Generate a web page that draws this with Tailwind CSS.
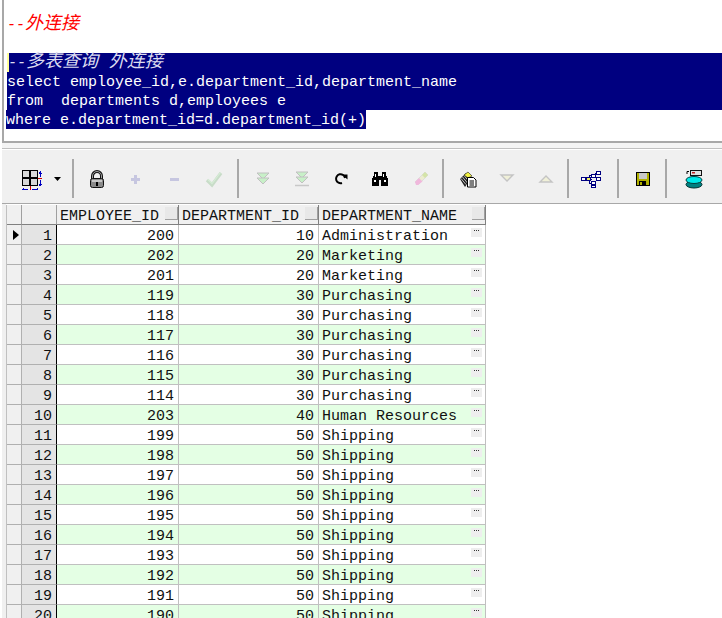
<!DOCTYPE html>
<html lang="en">
  <head>
    <title>Outer join query</title>
    <meta charset="utf-8">
    <script src="https://cdn.jsdelivr.net/npm/@tailwindcss/browser@4"></script>
  </head>

  <body class="bg-white">
   <div class="w-[722px] h-[618px] overflow-hidden flex flex-col bg-white font-['Liberation_Mono','Noto_Sans_CJK_SC',monospace] text-[15px] text-[#111]">

    <!-- sql editor -->
    <div class="h-[143px] ml-[2px] border-l-2 border-b-2 border-[#a8a8a8] pt-[14px] pl-[3px] shrink-0">
      <div class="h-[20px] leading-[20px] italic text-[#ff0000] text-[18px]"><span class="text-[15px]">--</span>外连接</div>
      <div class="mt-[19px] bg-[#000080] text-white leading-[21px] relative">
        <div class="absolute left-0 top-0 w-[2px] h-[19px] bg-[#ffff99]"></div>
        <div class="h-[19px] leading-[19px] italic text-[#dcdcf0] text-[18px] pl-[1px] whitespace-pre"><span class="text-[15px]">--</span>多表查询 外连接</div>
        <div class="h-[19px] whitespace-pre">select employee_id,e.department_id,department_name</div>
        <div class="h-[19px] whitespace-pre">from  departments d,employees e</div>
      </div>
      <div class="h-[19px] leading-[21px] bg-[#000080] text-white w-[360px] -ml-[1px] whitespace-pre">where e.department_id=d.department_id(+)</div>
    </div>

    <div class="h-[5px] shrink-0 bg-[#f4f4f4] ml-[2px]"></div>
    <div class="h-[1px] shrink-0 bg-[#c0c0c0] ml-[2px]"></div>
    <div class="h-[1px] shrink-0"></div>

    <!-- toolbar -->
    <div class="h-[54px] ml-[2px] pt-[9px] bg-[#f0f0f0] border-b border-[#a8a8a8] flex items-start shrink-0 pl-[10px]">
      <button class="w-[38px] h-[39px] flex items-center justify-center">
        <svg width="24" height="24" shape-rendering="crispEdges"><rect x="4" y="4" width="14" height="14" fill="#d8d8d8"/><path d="M3.5 3.5h15v15h-15zM11 3.5v15M3.5 11h15" fill="none" stroke="#000" stroke-width="1.4"/><path d="M19 11h4M11 19v4" stroke="#d00000" fill="none"/><path d="M21 4v6M19.5 6h3M20 5h2M21 13v6M19.5 17h3M20 18h2M3 22h6M4 21v2M13 22h6M18 21v2" stroke="#0000c0" fill="none"/></svg>
      </button>
      <button class="w-[16px] h-[39px] flex items-center justify-center">
        <svg width="8" height="6"><path d="M0 1h7L3.5 5z" fill="#000"/></svg>
      </button>
      <div class="w-[2px] h-[39px] bg-[#a8a8a8] ml-[6px] mr-[3px]"></div>
      <button class="w-[39px] h-[39px] flex items-center justify-center">
        <svg width="24" height="24"><path d="M7.5 12V9a4.500 4.500 0 0 1 9 0V12" fill="none" stroke="#111" stroke-width="3"/><path d="M7.500 12V9a4.500 4.500 0 0 1 9 0V12" fill="none" stroke="#a0a0a0" stroke-width="1"/><rect x="5.500" y="11.500" width="13" height="9" rx="2" fill="#8a8a8a" stroke="#111"/><rect x="7" y="13" width="10" height="2" fill="#c8c8c8"/><path d="M12 15v4" stroke="#000" stroke-width="2"/></svg>
      </button>
      <button class="w-[39px] h-[39px] flex items-center justify-center">
        <svg width="24" height="24" shape-rendering="crispEdges"><path d="M10 8h3v3h3v3h-3v3h-3v-3H7v-3h3z" fill="#c6c6e0"/></svg>
      </button>
      <button class="w-[39px] h-[39px] flex items-center justify-center">
        <svg width="24" height="24" shape-rendering="crispEdges"><rect x="7" y="11" width="9" height="3" fill="#c6c6e0"/></svg>
      </button>
      <button class="w-[39px] h-[39px] flex items-center justify-center">
        <svg width="24" height="24"><path d="M5 13l5 5L19 6" fill="none" stroke="#c8dcc8" stroke-width="3.4"/><path d="M6 12.5l4 4L18.500 5.500" fill="none" stroke="#d6ecd6" stroke-width="1.2"/></svg>
      </button>
      <div class="w-[2px] h-[39px] bg-[#a8a8a8] ml-[4px] mr-[4px]"></div>
      <button class="w-[39px] h-[39px] flex items-center justify-center">
        <svg width="24" height="24"><path d="M6 6h12l-6 6z" fill="#c8f0c8" stroke="#c0c0c0"/><path d="M6 11h12l-6 6z" fill="#c8f0c8" stroke="#c0c0c0"/></svg>
      </button>
      <button class="w-[39px] h-[39px] flex items-center justify-center">
        <svg width="24" height="24"><path d="M6 5h12l-6 6z" fill="#c8f0c8" stroke="#c0c0c0"/><path d="M6 10h12l-6 6z" fill="#c8f0c8" stroke="#c0c0c0"/><path d="M5 18.500h14" stroke="#c8c8c8" stroke-width="1.500"/></svg>
      </button>
      <button class="w-[39px] h-[39px] flex items-center justify-center">
        <svg width="24" height="24"><path d="M16 11a4.500 4.500 0 1 0-3 5" fill="none" stroke="#000" stroke-width="2"/><path d="M13 7.500h5.500V12.500z" fill="#000"/></svg>
      </button>
      <button class="w-[40px] h-[39px] flex items-center justify-center">
        <svg width="24" height="24" shape-rendering="crispEdges"><path d="M6 5h4v4h4V5h4v4h1v2h1v8h-7v-6h-2v6H4v-8h1V9h1z" fill="#000"/><path d="M6 13h2v2H6zM16 13h2v2h-2zM7 7h1v3H7zM15 7h1v3h-1z" fill="#fff"/></svg>
      </button>
      <button class="w-[41px] h-[39px] flex items-center justify-center">
        <svg width="24" height="24"><path d="M6 15L16 5l3 3-10 10z" fill="#ececd0" stroke="#dcdcdc"/><path d="M6 15l4-4 3.500 3.500-4.500 3.500-2 0z" fill="#f0b8dc"/><path d="M13 8l3-3 3 3-3 3z" fill="#d4e4a8"/></svg>
      </button>
      <div class="w-[2px] h-[39px] bg-[#a8a8a8] ml-[1px] mr-[4px]"></div>
      <button class="w-[39px] h-[39px] flex items-center justify-center">
        <svg width="24" height="24"><path d="M4 12l6-6 5 5-6 9z" fill="#222"/><path d="M5 11.500l5 6M6.500 10l5 6M8 8.500l5 6" stroke="#fff" stroke-width=".7"/><path d="M8 8l4-3 4 4-4 2z" fill="#f0f040" stroke="#222" stroke-width=".6"/><path d="M11.500 10.500h6l2.500 2.500v7h-8.500z" fill="#fff" stroke="#000"/><path d="M13.500 14h4.500M13.500 16h4.500M13.500 18h4.500" stroke="#000"/></svg>
      </button>
      <button class="w-[39px] h-[39px] flex items-center justify-center">
        <svg width="24" height="24"><path d="M6 8h12l-6 6z" fill="#f0f0d8" stroke="#c4c4c4" stroke-width="1.400"/></svg>
      </button>
      <button class="w-[39px] h-[39px] flex items-center justify-center">
        <svg width="24" height="24"><path d="M6 15h12l-6-6z" fill="#f0f0d8" stroke="#c4c4c4" stroke-width="1.400"/></svg>
      </button>
      <div class="w-[2px] h-[39px] bg-[#a8a8a8] ml-[2px] mr-[3px]"></div>
      <button class="w-[39px] h-[39px] flex items-center justify-center">
        <svg width="24" height="24" shape-rendering="crispEdges"><g transform="translate(-2 0)"><path d="M7 12h7M11 12V8h2M11 12v4h2M17 6v4M17 14v4" fill="none" stroke="#000080"/><g fill="#fff" stroke="#000080"><rect x="3.500" y="10.500" width="4" height="2.500"/><rect x="8.500" y="10.500" width="4" height="2.500" fill="#f0f060"/><rect x="13.500" y="7.500" width="4" height="2.500"/><rect x="13.500" y="14.500" width="4" height="2.500"/><rect x="18" y="4.500" width="4" height="2.500"/><rect x="18" y="10.500" width="4" height="2.500"/><rect x="13.500" y="18" width="4" height="2.500"/></g></g></svg>
      </button>
      <div class="w-[2px] h-[39px] bg-[#a8a8a8] ml-[6px] mr-[4px]"></div>
      <button class="w-[39px] h-[39px] flex items-center justify-center">
        <svg width="24" height="24" shape-rendering="crispEdges"><rect x="5" y="5" width="14" height="14" fill="#000"/><rect x="6" y="6" width="12" height="12" fill="#b0b000"/><rect x="8" y="6" width="8" height="6" fill="#c8c8c8"/><rect x="8" y="14" width="7" height="4" fill="#000"/><rect x="9" y="15" width="2" height="3" fill="#b0b000"/></svg>
      </button>
      <div class="w-[2px] h-[39px] bg-[#a8a8a8] ml-[3px] mr-[7px]"></div>
      <button class="w-[39px] h-[39px] flex items-center justify-center">
        <svg width="24" height="24"><path d="M5 7V4.500h2" fill="none" stroke="#000"/><rect x="8.500" y="3.500" width="11" height="5" fill="#e0e0e0" stroke="#111"/><rect x="10" y="5" width="3" height="1.500" fill="#c02020"/><ellipse cx="12" cy="17.500" rx="8" ry="3.500" fill="#008080" stroke="#003030"/><ellipse cx="12" cy="13" rx="8" ry="3.500" fill="#00e8e8" stroke="#004040"/></svg>
      </button>
    </div>

    <!-- result grid -->
    <div class="flex-1 ml-[2px] flex items-start pt-[1px] min-h-0">
      <div class="w-[4px] self-stretch bg-[#f0f0f0] -mt-[1px]"></div>
      <div id="grid" class="w-[480px] grid grid-cols-[15px_35px_122px_140px_167px] auto-rows-[20px] leading-[24px] border-l border-[#c0c0c0]">
        <div class="bg-[#f0f0f0] border-r border-b border-b-[#808080] border-r-[#a0a0a0]"></div>
        <div class="bg-[#f0f0f0] border-r border-b border-b-[#808080] border-r-[#a0a0a0]"></div>
        <div class="bg-[#f0f0f0] border-r border-b border-[#808080] pl-[3px] flex justify-between"><span>EMPLOYEE_ID</span><span class="w-[13px] h-[13px] mt-[2px] border-r border-b border-[#a0a0a0] bg-[#e8e8e8]"></span></div>
        <div class="bg-[#f0f0f0] border-r border-b border-[#808080] pl-[3px] flex justify-between"><span>DEPARTMENT_ID</span><span class="w-[13px] h-[13px] mt-[2px] border-r border-b border-[#a0a0a0] bg-[#e8e8e8]"></span></div>
        <div class="bg-[#f0f0f0] border-r border-b border-[#808080] pl-[3px] flex justify-between"><span>DEPARTMENT_NAME</span><span class="w-[13px] h-[13px] mt-[2px] border-r border-b border-[#a0a0a0] bg-[#e8e8e8]"></span></div>
      </div>
    </div>
   </div>

    <script type="text/javascript">
        const rows = [
            [200, 10, "Administration"], [202, 20, "Marketing"], [201, 20, "Marketing"],
            [119, 30, "Purchasing"], [118, 30, "Purchasing"], [117, 30, "Purchasing"],
            [116, 30, "Purchasing"], [115, 30, "Purchasing"], [114, 30, "Purchasing"],
            [203, 40, "Human Resources"], [199, 50, "Shipping"], [198, 50, "Shipping"],
            [197, 50, "Shipping"], [196, 50, "Shipping"], [195, 50, "Shipping"],
            [194, 50, "Shipping"], [193, 50, "Shipping"], [192, 50, "Shipping"],
            [191, 50, "Shipping"], [190, 50, "Shipping"]
        ];
        let html = "";
        rows.forEach((row, i) => {
            const bg = i % 2 ? "bg-[#e4ffe4]" : "bg-white";
            const arrow = i == 0 ? '<svg width="7" height="10" class="ml-[6px] mt-[5px]"><path d="M0 0l6 5-6 5z" fill="#000"/></svg>' : "";
            html += `<div class="bg-[#f0f0f0] border-r border-b border-[#b0b0b0]">${arrow}</div>`;
            html += `<div class="bg-[#e4e4e4] border-r border-b border-r-[#000] border-b-[#b0b0b0] text-right pr-[4px]">${i + 1}</div>`;
            html += `<div class="${bg} border-r border-b border-[#c0c0c0] text-right pr-[4px]">${row[0]}</div>`;
            html += `<div class="${bg} border-r border-b border-[#c0c0c0] text-right pr-[4px]">${row[1]}</div>`;
            html += `<div class="${bg} border-r border-b border-[#c0c0c0] pl-[3px] flex justify-between"><span>${row[2]}</span><span class="w-[11px] h-[9px] mt-[3px] mr-[3px] bg-[#eeeeee] flex justify-center gap-[1px] pt-[2px]"><i class="w-[1px] h-[1px] bg-[#333]"></i><i class="w-[1px] h-[1px] bg-[#333]"></i><i class="w-[1px] h-[1px] bg-[#333]"></i></span></div>`;
        });
        document.getElementById("grid").insertAdjacentHTML("beforeend", html);
    </script>
  </body>
</html>
